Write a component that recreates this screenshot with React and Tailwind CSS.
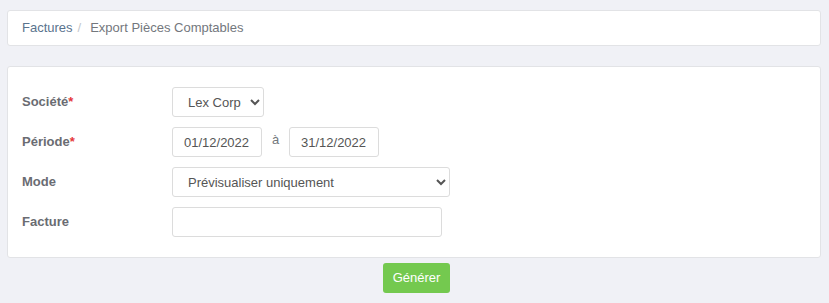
import React from "react";

const font = { fontFamily: '"Liberation Sans", Arial, sans-serif' };

function Label({ children, required }) {
  return (
    <div className="w-[150px] shrink-0 text-[13px] font-bold text-[#6a6c72]">
      {children}
      {required && <span className="text-[#e5383b]">*</span>}
    </div>
  );
}

export default function App() {
  return (
    <div className="min-h-[303px] w-[829px] bg-[#f0f1f6] pt-[10px] pl-[7px] pr-[8px]" style={font}>
      <div className="flex h-[36px] items-center rounded-[3px] border border-[#e2e3e6] bg-white pl-[14px] text-[13px]">
        <span className="text-[#5a738e]">Factures</span>
        <span className="px-[5px] text-[#c4c7cc]">/</span>
        <span className="pl-[4px] text-[#73777d]">Export Pièces Comptables</span>
      </div>

      <div className="mt-[20px] flex flex-col gap-[10px] rounded-[3px] border border-[#e2e3e6] bg-white pt-[20px] pb-[20px] pl-[14px]">
        <div className="flex h-[30px] items-center">
          <Label required>Société</Label>
          <select className="h-[30px] w-[92px] rounded-[3px] border border-[#dcdcdc] bg-white pl-[11px] pr-[4px] text-[13px] text-[#555] outline-none">
            <option>Lex Corp</option>
          </select>
        </div>
        <div className="flex h-[30px] items-center">
          <Label required>Période</Label>
          <input
            defaultValue="01/12/2022"
            className="h-[30px] w-[90px] rounded-[3px] border border-[#dcdcdc] bg-white px-[11px] text-[13px] text-[#555] outline-none"
          />
          <span className="w-[27px] pb-[4px] text-center text-[13px] text-[#73777d]">à</span>
          <input
            defaultValue="31/12/2022"
            className="h-[30px] w-[90px] rounded-[3px] border border-[#dcdcdc] bg-white px-[11px] text-[13px] text-[#555] outline-none"
          />
        </div>
        <div className="flex h-[30px] items-center">
          <Label>Mode</Label>
          <select className="h-[30px] w-[278px] rounded-[3px] border border-[#dcdcdc] bg-white pl-[11px] pr-[4px] text-[13px] text-[#555] outline-none">
            <option>Prévisualiser uniquement</option>
          </select>
        </div>
        <div className="flex h-[30px] items-center">
          <Label>Facture</Label>
          <input className="h-[30px] w-[270px] rounded-[3px] border border-[#dcdcdc] bg-white px-[11px] text-[13px] text-[#555] outline-none" />
        </div>
      </div>

      <div className="mt-[5px] flex justify-center pl-[5px]">
        <button className="h-[30px] w-[67px] rounded-[3px] bg-[#74c94f] text-[13px] text-white">Générer</button>
      </div>
    </div>
  );
}
